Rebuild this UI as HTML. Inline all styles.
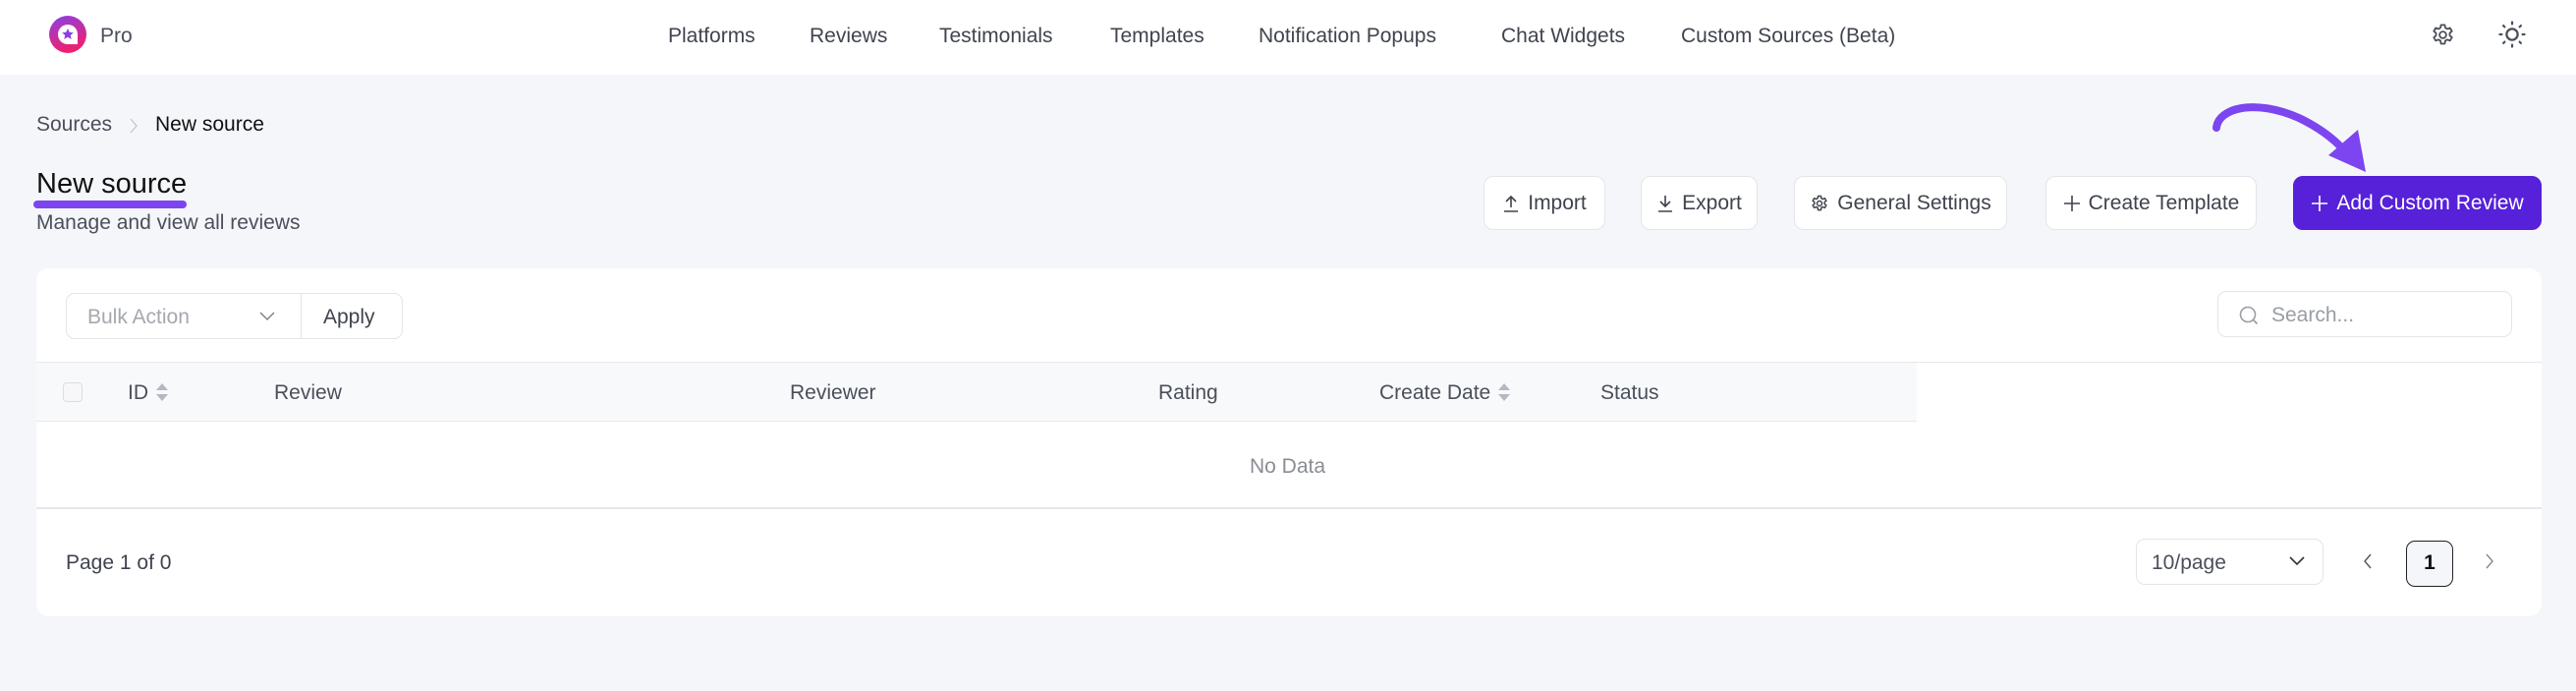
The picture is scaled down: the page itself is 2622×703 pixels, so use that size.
<!DOCTYPE html>
<html><head><meta charset="utf-8"><style>
*{box-sizing:border-box;margin:0;padding:0}
body{width:2622px;height:703px;background:#f5f6fa;font-family:"Liberation Sans",sans-serif;position:relative;overflow:hidden;color:#4b4f5a}
.a{position:absolute;white-space:nowrap}
.hdr{position:absolute;left:0;top:0;width:2622px;height:76px;background:#fff}
.nav{font-size:21px;font-weight:500;color:#40444e;top:25px}
.btn{position:absolute;top:179px;height:55px;border:1px solid #e3e5ea;background:#fff;border-radius:10px;font-size:21px;color:#3f434d;display:flex;align-items:center;justify-content:center;gap:8px;font-weight:500}
.card{position:absolute;left:37px;top:273px;width:2550px;height:354px;background:#fff;border-radius:13px;overflow:hidden}
.th{font-size:21px;color:#4b4f5a;top:115px}
.sort{display:inline-block;vertical-align:middle;margin-left:8px;width:12px;height:20px;position:relative}
.sort:before{content:"";position:absolute;left:0;top:0;border:6px solid transparent;border-bottom:7px solid #b5b8bf;border-top:0}
.sort:after{content:"";position:absolute;left:0;top:11px;border:6px solid transparent;border-top:7px solid #b5b8bf;border-bottom:0}
</style></head><body>
<div class="hdr"></div>
<svg class="a" style="left:50px;top:16px" width="38" height="38" viewBox="0 0 38 38"><defs><linearGradient id="g" x1="0" y1="0" x2="0.3" y2="1"><stop offset="0" stop-color="#8b3fe6"/><stop offset="1" stop-color="#f0206e"/></linearGradient></defs><circle cx="19" cy="19" r="19" fill="url(#g)"/><path d="M19 9a10 10 0 1 0 0 20h10v-10A10 10 0 0 0 19 9z" fill="#fff"/><path d="M19 13l1.8 3.8 4 .4-3 2.7.9 4-3.7-2.1-3.7 2.1.9-4-3-2.7 4-.4z" fill="#8b3fe6"/></svg>
<div class="a" style="left:102px;top:25px;font-size:21px;color:#4b4f5a;font-weight:500">Pro</div>
<div class="a nav" style="left:680px">Platforms</div>
<div class="a nav" style="left:824px">Reviews</div>
<div class="a nav" style="left:956px">Testimonials</div>
<div class="a nav" style="left:1130px">Templates</div>
<div class="a nav" style="left:1281px">Notification Popups</div>
<div class="a nav" style="left:1528px">Chat Widgets</div>
<div class="a nav" style="left:1711px">Custom Sources (Beta)</div>
<svg class="a" style="left:2473px;top:22px" width="27" height="27" viewBox="0 0 24 24" fill="none" stroke="#4b4f5a" stroke-width="1.6"><path d="M10.3 3h3.4l.5 2.6 1.8 1 2.5-.9 1.7 2.9-2 1.8v2.1l2 1.8-1.7 2.9-2.5-.9-1.8 1-.5 2.7h-3.4l-.5-2.7-1.8-1-2.5.9-1.7-2.9 2-1.8v-2.1l-2-1.8 1.7-2.9 2.5.9 1.8-1z" stroke-linejoin="round"/><circle cx="12" cy="12" r="3"/></svg>
<svg class="a" style="left:2542px;top:20px" width="30" height="30" viewBox="0 0 24 24" fill="none" stroke="#4b4f5a" stroke-width="1.8" stroke-linecap="round"><circle cx="12" cy="12" r="4.5"/><path d="M12 2v1.5M12 20.5V22M2 12h1.5M20.5 12H22M4.9 4.9l1 1M18.1 18.1l1 1M4.9 19.1l1-1M18.1 5.9l1-1"/></svg>

<div class="a" style="left:37px;top:115px;font-size:21px;color:#4b4f5a">Sources</div>
<svg class="a" style="left:131px;top:119px" width="10" height="18" viewBox="0 0 10 18"><path d="M2 2l6 7-6 7" stroke="#c4c6cc" stroke-width="1.3" fill="none"/></svg>
<div class="a" style="left:158px;top:115px;font-size:21px;color:#111;font-weight:500">New source</div>
<div class="a" style="left:37px;top:171px;font-size:29px;color:#111;font-weight:500">New source</div>
<div class="a" style="left:34px;top:204px;width:156px;height:8px;background:#7c45f0;border-radius:4px"></div>
<div class="a" style="left:37px;top:215px;font-size:21px;color:#4b4f5a">Manage and view all reviews</div>

<div class="btn" style="left:1510px;width:124px"><svg width="18" height="20" viewBox="0 0 18 20" fill="none" stroke="#3f434d" stroke-width="1.6"><path d="M9 14V3M4 8l5-5 5 5M2 18h14"/></svg>Import</div>
<div class="btn" style="left:1670px;width:119px"><svg width="18" height="20" viewBox="0 0 18 20" fill="none" stroke="#3f434d" stroke-width="1.6"><path d="M9 2v11M4 8l5 5 5-5M2 18h14"/></svg>Export</div>
<div class="btn" style="left:1826px;width:217px"><svg width="20" height="20" viewBox="0 0 24 24" fill="none" stroke="#3f434d" stroke-width="1.8"><path d="M10.3 3h3.4l.5 2.6 1.8 1 2.5-.9 1.7 2.9-2 1.8v2.1l2 1.8-1.7 2.9-2.5-.9-1.8 1-.5 2.7h-3.4l-.5-2.7-1.8-1-2.5.9-1.7-2.9 2-1.8v-2.1l-2-1.8 1.7-2.9 2.5.9 1.8-1z"/><circle cx="12" cy="12" r="3"/></svg>General Settings</div>
<div class="btn" style="left:2082px;width:215px"><svg width="18" height="18" viewBox="0 0 18 18" stroke="#3f434d" stroke-width="1.6"><path d="M9 1v16M1 9h16"/></svg>Create Template</div>
<div class="btn" style="left:2334px;width:253px;background:#5621d9;border-color:#5621d9;color:#fff"><svg width="18" height="18" viewBox="0 0 18 18" stroke="#fff" stroke-width="1.6"><path d="M9 1v16M1 9h16"/></svg>Add Custom Review</div>
<svg class="a" style="left:2240px;top:100px" width="180" height="82" viewBox="0 0 180 82"><path d="M16 30C18 10 55 0 100 20 C125 32 140 45 150 58" stroke="#7c45f0" stroke-width="8" fill="none" stroke-linecap="round"/><path d="M130 58L168 75 160 32z" fill="#7c45f0"/></svg>

<div class="card">
  <div class="a" style="left:30px;top:25px;width:343px;height:47px;border:1px solid #e3e5ea;border-radius:9px"></div>
  <div class="a" style="left:269px;top:25px;width:1px;height:47px;background:#e3e5ea"></div>
  <div class="a" style="left:52px;top:38px;font-size:21px;color:#a5a8ae">Bulk Action</div>
  <svg class="a" style="left:227px;top:44px" width="16" height="10" viewBox="0 0 16 10"><path d="M1 1l7 7 7-7" stroke="#777" stroke-width="1.3" fill="none"/></svg>
  <div class="a" style="left:292px;top:38px;font-size:21px;color:#3f434d;font-weight:500">Apply</div>
  <div class="a" style="left:2220px;top:23px;width:300px;height:47px;border:1px solid #e3e5ea;border-radius:9px"></div>
  <svg class="a" style="left:2241px;top:37px" width="22" height="22" viewBox="0 0 22 22" fill="none" stroke="#9a9da4" stroke-width="1.6"><circle cx="10" cy="10" r="7.5"/><path d="M15.5 15.5l4 4"/></svg>
  <div class="a" style="left:2275px;top:36px;font-size:21px;color:#9a9da4">Search...</div>
  <div class="a" style="left:0;top:95px;width:2550px;height:1px;background:#e7e8ec"></div>
  <div class="a" style="left:0;top:96px;width:1914px;height:59px;background:#f8f9fb"></div>
  <div class="a" style="left:0;top:155px;width:1914px;height:1px;background:#e7e8ec"></div>
  <div class="a" style="left:27px;top:116px;width:20px;height:20px;border:1px solid #dcdee3;border-radius:4px;background:#f7f7f9"></div>
  <div class="a th" style="left:93px">ID<span class="sort"></span></div>
  <div class="a th" style="left:242px">Review</div>
  <div class="a th" style="left:767px">Reviewer</div>
  <div class="a th" style="left:1142px">Rating</div>
  <div class="a th" style="left:1367px">Create Date<span class="sort"></span></div>
  <div class="a th" style="left:1592px">Status</div>
  <div class="a" style="left:1235px;top:190px;font-size:21px;color:#8a8d94">No Data</div>
  <div class="a" style="left:0;top:243px;width:2550px;height:2px;background:#e7e8ec"></div>
  <div class="a" style="left:30px;top:288px;font-size:21px;color:#3f434d">Page 1 of 0</div>
  <div class="a" style="left:2137px;top:275px;width:191px;height:47px;border:1px solid #e3e5ea;border-radius:9px"></div>
  <div class="a" style="left:2153px;top:288px;font-size:21px;color:#4b4f5a">10/page</div>
  <svg class="a" style="left:2293px;top:293px" width="16" height="10" viewBox="0 0 16 10"><path d="M1 1l7 7 7-7" stroke="#333" stroke-width="1.6" fill="none"/></svg>
  <svg class="a" style="left:2368px;top:289px" width="10" height="18" viewBox="0 0 10 18"><path d="M8 2L2 9l6 7" stroke="#555" stroke-width="1.4" fill="none"/></svg>
  <div class="a" style="left:2412px;top:277px;width:48px;height:47px;border:1.5px solid #222;border-radius:9px;background:#f5f6fa;font-size:21px;font-weight:700;color:#111;text-align:center;line-height:44px">1</div>
  <svg class="a" style="left:2492px;top:289px" width="10" height="18" viewBox="0 0 10 18"><path d="M2 2l6 7-6 7" stroke="#888" stroke-width="1.4" fill="none"/></svg>
</div>
</body></html>
